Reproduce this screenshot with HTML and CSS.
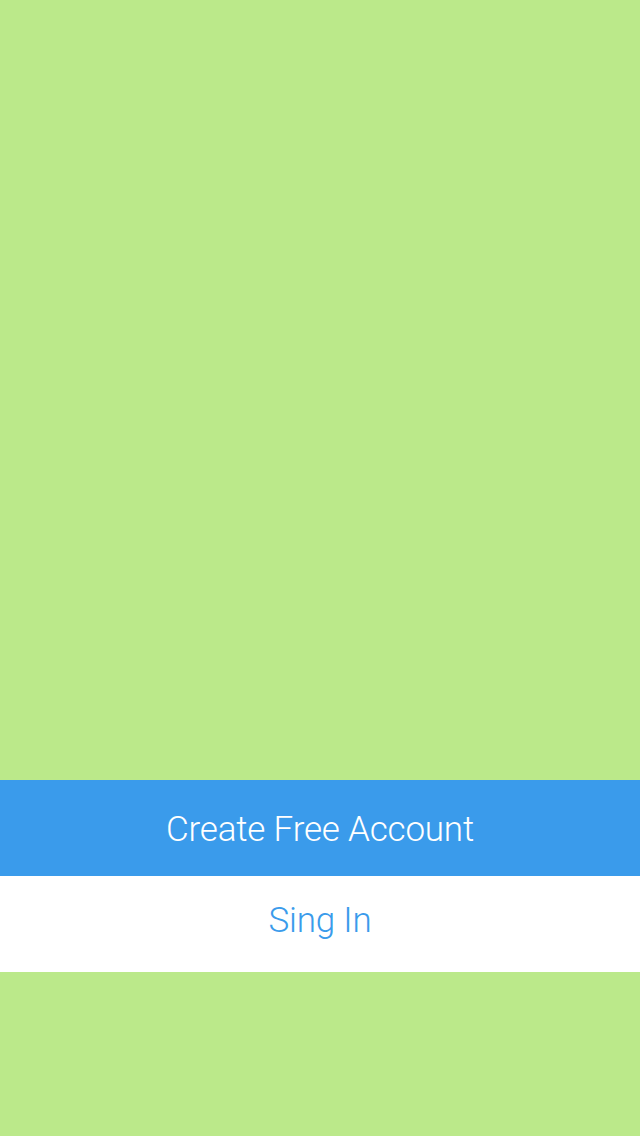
FILE: index.html
```html
<!DOCTYPE html>
<html>
<head>
<meta charset="utf-8">
<link rel="stylesheet" href="styles.css">
</head>
<body>
<div class="screen">
  <div class="spacer"></div>
  <div class="actions">
    <button class="btn btn-primary">Create Free Account</button>
    <button class="btn btn-secondary">Sing In</button>
  </div>
  <div class="bottom"></div>
</div>
</body>
</html>
```
FILE: styles.css
```css
html, body {
  margin: 0;
  padding: 0;
}
body {
  background: #bbe98a;
  font-family: Roboto, "Helvetica Neue", "Liberation Sans", sans-serif;
}
.screen {
  width: 640px;
  height: 1136px;
  display: flex;
  flex-direction: column;
}
.spacer {
  height: 780px;
}
.actions {
  display: flex;
  flex-direction: column;
}
.btn {
  height: 96px;
  border: 0;
  margin: 0;
  padding: 0;
  width: 100%;
  font-family: inherit;
  font-weight: 300;
  font-size: 35px;
  letter-spacing: -0.2px;
  display: flex;
  align-items: center;
  justify-content: center;
}
.btn-primary {
  background: #3a9beb;
  color: #ffffff;
  padding-top: 2px;
}
.btn-secondary {
  background: #ffffff;
  color: #3a9beb;
  padding-bottom: 8px;
}
.bottom {
  flex: 1;
}
```
